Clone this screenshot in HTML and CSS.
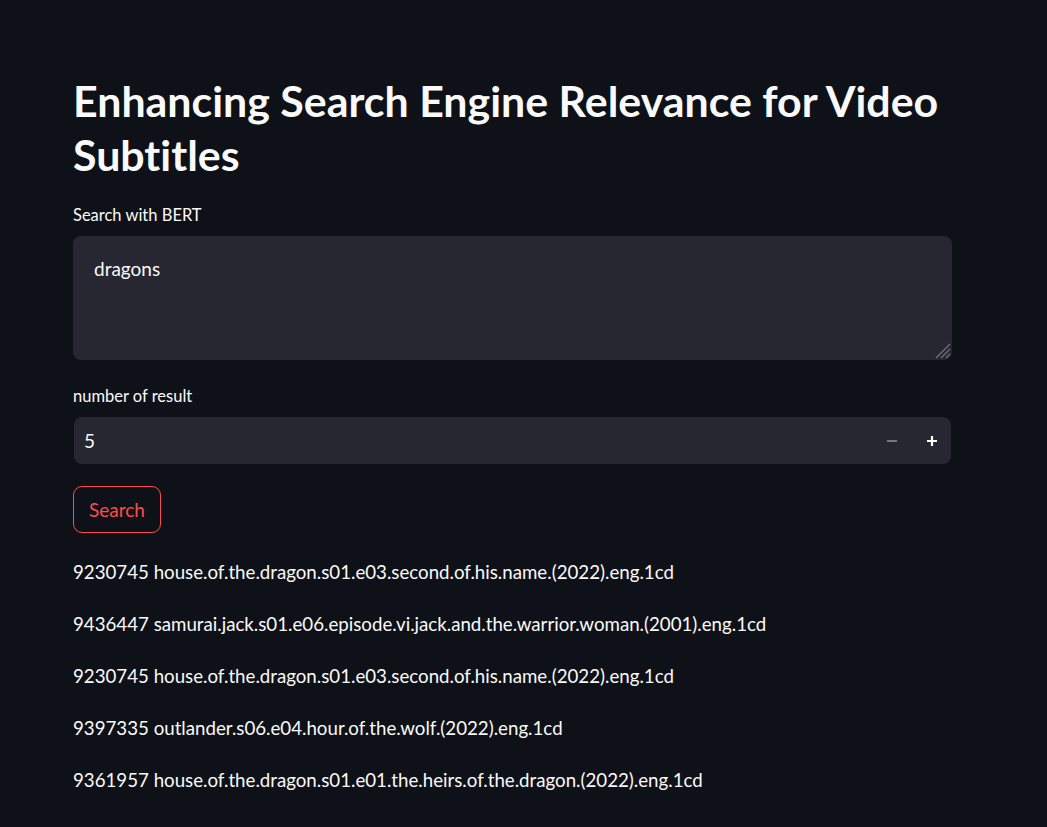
FILE: index.html
```html
<!DOCTYPE html>
<html>
<head>
<meta charset="utf-8">
<link rel="stylesheet" href="styles.css">
</head>
<body>
<main class="main">
  <h1 class="title">Enhancing Search Engine Relevance for Video Subtitles</h1>
  <div class="field">
    <label class="label">Search with BERT</label>
    <div class="textarea">dragons<span class="grip"><svg width="18" height="18" viewBox="0 0 18 18"><path d="M17 3 L3 17 M17 8 L8 17 M17 13 L13 17" stroke="#6f717a" stroke-width="1.2"/></svg></span></div>
  </div>
  <div class="field field-num">
    <label class="label">number of result</label>
    <div class="number">
      <span class="num-value">5</span>
      <span class="step minus"><svg width="10" height="10" viewBox="0 0 10 10"><path d="M0 5 H10" stroke="#8b8d96" stroke-width="1.6"/></svg></span>
      <span class="step plus"><svg width="10" height="10" viewBox="0 0 10 10"><path d="M0 5 H10 M5 0 V10" stroke="#fafafa" stroke-width="2.2"/></svg></span>
    </div>
  </div>
  <button class="btn">Search</button>
  <div class="results">
    <p>9230745 house.of.the.dragon.s01.e03.second.of.his.name.(2022).eng.1cd</p>
    <p>9436447 samurai.jack.s01.e06.episode.vi.jack.and.the.warrior.woman.(2001).eng.1cd</p>
    <p>9230745 house.of.the.dragon.s01.e03.second.of.his.name.(2022).eng.1cd</p>
    <p>9397335 outlander.s06.e04.hour.of.the.wolf.(2022).eng.1cd</p>
    <p>9361957 house.of.the.dragon.s01.e01.the.heirs.of.the.dragon.(2022).eng.1cd</p>
  </div>
</main>
</body>
</html>
```
FILE: styles.css
```css
html, body {
  margin: 0;
  padding: 0;
  background: #0e1117;
  color: #fafafa;
  font-family: Lato, "Noto Sans", sans-serif;
  font-variant-ligatures: none;
}
.main {
  width: 879px;
  margin-left: 73px;
  padding-top: 74px;
}
.title {
  margin: 0 0 23px 0;
  font-size: 42.9px;
  line-height: 54px;
  font-weight: 700;
}
.field {
  display: flex;
  flex-direction: column;
  margin-bottom: 26px;
}
.field-num {
  margin-bottom: 22px;
}
.label {
  font-size: 16.5px;
  line-height: 20px;
  margin-bottom: 11px;
}
.textarea {
  position: relative;
  background: #262730;
  border-radius: 8px;
  height: 124px;
  box-sizing: border-box;
  padding: 21px 21px;
  font-size: 19px;
  line-height: 24px;
}
.grip {
  position: absolute;
  right: 1px;
  bottom: 1px;
  line-height: 0;
}
.number {
  display: flex;
  align-items: center;
  background: #262730;
  border-radius: 8px;
  height: 47px;
  margin-left: 1px;
  margin-right: 1px;
  padding-left: 10px;
  font-size: 19px;
}
.num-value { flex: 1; }
.step {
  width: 40px;
  display: flex;
  justify-content: center;
  align-items: center;
  line-height: 0;
}
.plus { margin-right: -1px; }
.btn {
  display: block;
  margin: 0;
  background: transparent;
  border: 1px solid #ff4b4b;
  color: #ff4b4b;
  border-radius: 9px;
  height: 47px;
  padding: 0 15px;
  font-family: Lato, "Noto Sans", sans-serif;
  font-size: 19px;
}
.results {
  margin-top: 27px;
}
.results p {
  margin: 0 0 28px 0;
  font-size: 18.7px;
  line-height: 24px;
}
```
